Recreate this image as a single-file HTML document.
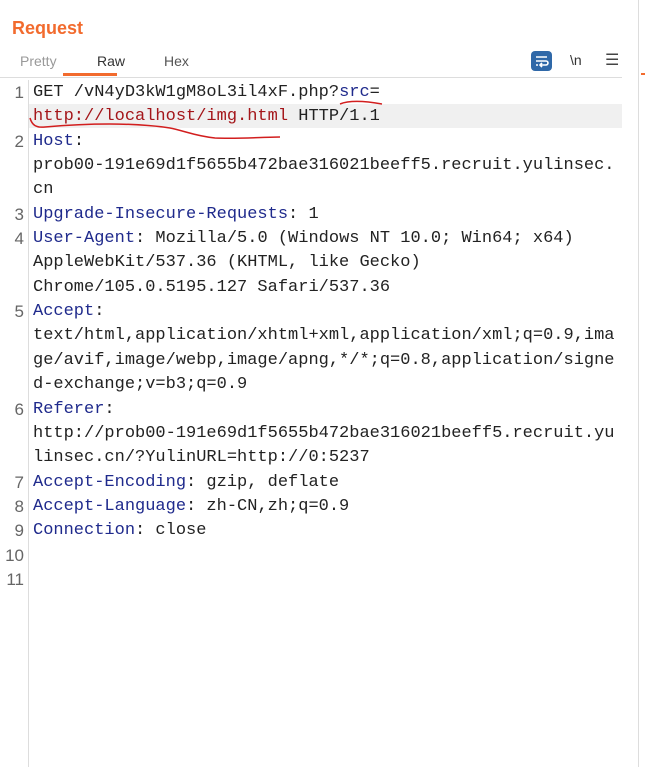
<!DOCTYPE html>
<html><head><meta charset="utf-8"><style>
body{margin:0;width:645px;height:767px;background:#fff;position:relative;overflow:hidden;font-family:"Liberation Sans",sans-serif}
.r{position:absolute;left:33px;height:24px;line-height:26px;font-family:"Liberation Mono",monospace;font-size:17px;color:#222;white-space:pre}
.n{position:absolute;left:0;width:24px;text-align:right;height:24px;line-height:26px;font-family:"Liberation Sans",sans-serif;font-size:17px;color:#666}
.k{color:#1f2a8c}
.u{color:#a4161a}
</style></head><body>
<div style="position:absolute;left:12px;top:18px;font-size:18px;font-weight:bold;color:#f26b2e">Request</div>
<div style="position:absolute;left:20px;top:53px;font-size:14px;color:#999">Pretty</div>
<div style="position:absolute;left:97px;top:53px;font-size:14px;color:#333">Raw</div>
<div style="position:absolute;left:164px;top:53px;font-size:14px;color:#555">Hex</div>
<div style="position:absolute;left:63px;top:73px;width:54px;height:3px;background:#f26b2e"></div>
<div style="position:absolute;left:0;top:77px;width:622px;height:1px;background:#ddd"></div>
<div style="position:absolute;left:531px;top:51px;width:21px;height:20px;background:#2f68a8;border-radius:4px"></div>
<svg style="position:absolute;left:531px;top:51px" width="21" height="20"><path d="M5 6h11M5 10h10a2 2 0 0 1 0 4h-5M5 14h2M11 12l-2 2 2 2" stroke="#fff" stroke-width="1.6" fill="none"/></svg>
<div style="position:absolute;left:570px;top:52px;font-size:14px;color:#333">\n</div>
<div style="position:absolute;left:605px;top:50px;font-size:16px;color:#444">☰</div>
<div style="position:absolute;left:638px;top:0;width:1px;height:767px;background:#ddd"></div>
<div style="position:absolute;left:641px;top:73px;width:4px;height:2px;background:#f26b2e"></div>
<div style="position:absolute;left:28px;top:80px;width:1px;height:687px;background:#ddd"></div>
<div style="position:absolute;left:29px;top:104px;width:593px;height:24px;background:#f0f0f0"></div>

<div class="n" style="top:80px">1</div><div class="r" style="top:80px">GET /vN4yD3kW1gM8oL3il4xF.php?<span class="k">src</span>=</div>
<div class="r" style="top:104px"><span class="u">http://localhost/img.html</span> HTTP/1.1</div>
<div class="n" style="top:129px">2</div><div class="r" style="top:129px"><span class="k">Host</span>:</div>
<div class="r" style="top:153px">prob00-191e69d1f5655b472bae316021beeff5.recruit.yulinsec.</div>
<div class="r" style="top:177px">cn</div>
<div class="n" style="top:202px">3</div><div class="r" style="top:202px"><span class="k">Upgrade-Insecure-Requests</span>: 1</div>
<div class="n" style="top:226px">4</div><div class="r" style="top:226px"><span class="k">User-Agent</span>: Mozilla/5.0 (Windows NT 10.0; Win64; x64)</div>
<div class="r" style="top:250px">AppleWebKit/537.36 (KHTML, like Gecko)</div>
<div class="r" style="top:275px">Chrome/105.0.5195.127 Safari/537.36</div>
<div class="n" style="top:299px">5</div><div class="r" style="top:299px"><span class="k">Accept</span>:</div>
<div class="r" style="top:323px">text/html,application/xhtml+xml,application/xml;q=0.9,ima</div>
<div class="r" style="top:348px">ge/avif,image/webp,image/apng,*/*;q=0.8,application/signe</div>
<div class="r" style="top:372px">d-exchange;v=b3;q=0.9</div>
<div class="n" style="top:397px">6</div><div class="r" style="top:397px"><span class="k">Referer</span>:</div>
<div class="r" style="top:421px">http://prob00-191e69d1f5655b472bae316021beeff5.recruit.yu</div>
<div class="r" style="top:445px">linsec.cn/?YulinURL=http://0:5237</div>
<div class="n" style="top:470px">7</div><div class="r" style="top:470px"><span class="k">Accept-Encoding</span>: gzip, deflate</div>
<div class="n" style="top:494px">8</div><div class="r" style="top:494px"><span class="k">Accept-Language</span>: zh-CN,zh;q=0.9</div>
<div class="n" style="top:518px">9</div><div class="r" style="top:518px"><span class="k">Connection</span>: close</div>
<div class="n" style="top:543px">10</div>
<div class="n" style="top:567px">11</div>

<svg style="position:absolute;left:0;top:0" width="645" height="160">
<path d="M340 104 C350 100 365 101 382 104" stroke="#d21e1e" stroke-width="1.5" fill="none"/>
<path d="M30 118 C32 125 36 128 45 127 C80 124 130 122 170 128 C185 131 195 136 215 138 C240 139 265 137 280 137" stroke="#d21e1e" stroke-width="1.5" fill="none"/>
</svg>
</body></html>
